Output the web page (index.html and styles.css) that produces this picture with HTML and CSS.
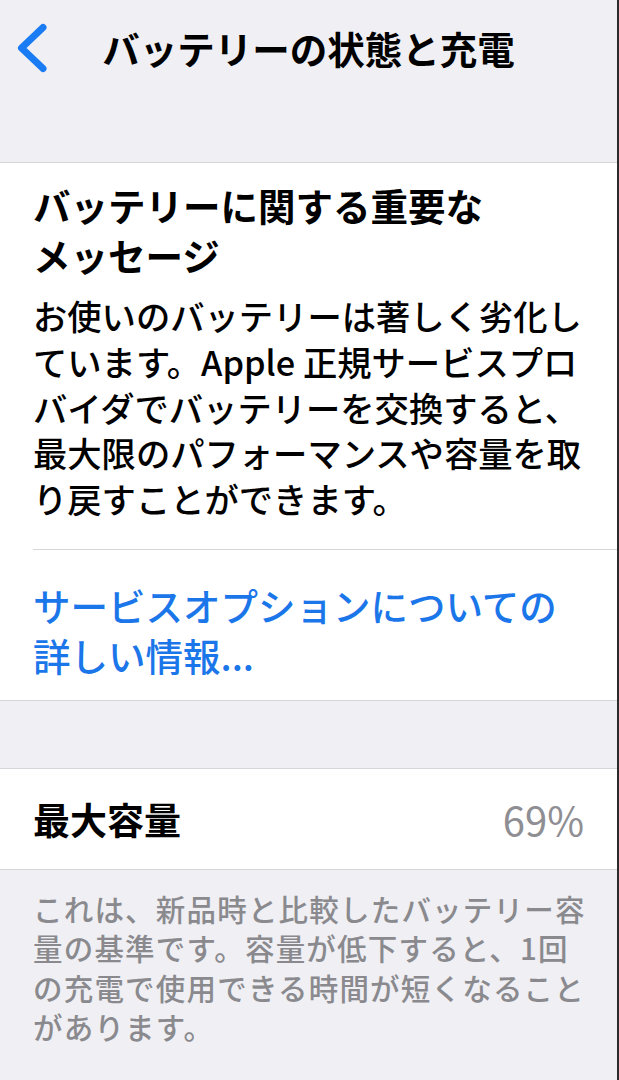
FILE: index.html
```html
<!DOCTYPE html>
<html lang="ja">
<head>
  <meta charset="UTF-8" />
  <meta name="viewport" content="width=device-width, initial-scale=1.0" />
  <title>バッテリーの状態と充電</title>
  <link rel="stylesheet" href="styles.css">
</head>
<body>
  <div class="screen">
    <header class="nav">
      <a class="back" href="#">
        <svg width="34" height="50" viewBox="0 0 34 50">
          <path d="M29 4.5 L7.5 25 L29 45.5" fill="none" stroke="#1a7cf4" stroke-width="7" stroke-linecap="round" stroke-linejoin="round" />
        </svg>
      </a>
      <h1>バッテリーの状態と充電</h1>
      <span></span>
    </header>

    <section class="group">
      <div class="message">
        <h2>バッテリーに関する重要な<br>メッセージ</h2>
        <p>お使いのバッテリーは著しく劣化し<br>ています。Apple 正規サービスプロ<br>バイダでバッテリーを交換すると、<br>最大限のパフォーマンスや容量を取<br>り戻すことができます。</p>
      </div>
      <a class="link" href="#">サービスオプションについての<br>詳しい情報...</a>
    </section>

    <section class="group group-last">
      <div class="row">
        <span class="row-label">最大容量</span>
        <span class="row-value">69%</span>
      </div>
    </section>

    <p class="footnote">これは、新品時と比較したバッテリー容<br>量の基準です。容量が低下すると、1回<br>の充電で使用できる時間が短くなること<br>があります。</p>
  </div>
</body>
</html>
```

FILE: styles.css
```css
body {
  margin: 0;
  background-color: #efeff4;
  font-family: "Noto Sans CJK JP", "Noto Sans", sans-serif;
  color: #000;
}

.screen {
  min-height: 1080px;
  border-right: 2px solid #2b2b2b;
  box-sizing: border-box;
}

.nav {
  display: grid;
  grid-template-columns: 1fr auto 1fr;
  align-items: center;
  height: 96px;
  margin-bottom: 66px;
}

.back {
  display: flex;
  padding-left: 14px;
}

.nav h1 {
  margin: 0;
  font-size: 37.5px;
  font-weight: 700;
  line-height: 1;
}

.group {
  background-color: #fff;
  border-top: 1px solid #d6d6da;
  border-bottom: 1px solid #d6d6da;
  margin-bottom: 67px;
}

.group-last {
  margin-bottom: 0;
}

.message {
  margin-left: 33px;
  padding: 17px 20px 27px 0;
  border-bottom: 1px solid #d6d6da;
}

.message h2 {
  margin: 0 0 13px;
  font-size: 37.5px;
  font-weight: 700;
  line-height: 50px;
}

.message p {
  margin: 0;
  font-size: 34.3px;
  font-weight: 500;
  line-height: 45.75px;
}

.link {
  display: block;
  padding: 30px 20px 20px 33px;
  color: #1b76e9;
  font-size: 37.5px;
  font-weight: 500;
  line-height: 50px;
  text-decoration: none;
}

.row {
  display: flex;
  justify-content: space-between;
  align-items: center;
  height: 100px;
  padding: 0 33px;
}

.row-label {
  font-size: 37px;
  font-weight: 700;
}

.row-value {
  font-size: 40px;
  color: #8e8e93;
}

.footnote {
  margin: 0;
  padding: 19px 20px 0 33px;
  font-size: 29.5px;
  font-weight: 500;
  letter-spacing: 1.2px;
  line-height: 39.5px;
  color: #8a8a8e;
}
```
